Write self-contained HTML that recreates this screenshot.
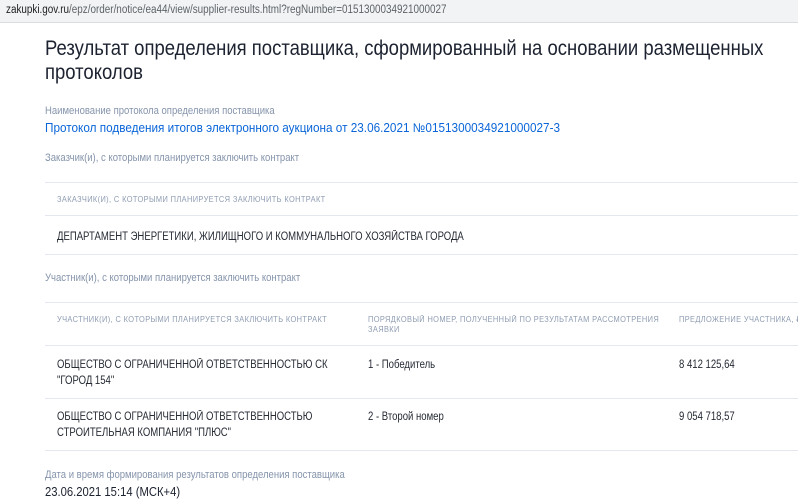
<!DOCTYPE html>
<html><head><meta charset="utf-8"><style>
body{margin:0;width:798px;height:500px;overflow:hidden;background:#fff;font-family:"Liberation Sans",Arial,sans-serif;position:relative}
.a{position:absolute;white-space:nowrap;transform-origin:0 0}
.bar{position:absolute;left:0;top:0;width:798px;height:22px;background:#f1f3f4;border-bottom:1px solid #dadce0}
.ln{position:absolute;left:45px;width:753px;height:1px;background:#e4e8ee}
.lab{color:#8594ab;font-size:11px;transform:scaleX(.865)}
.th{color:#8e9cb2;font-size:8px;letter-spacing:.4px;transform:scaleX(.93)}
.td{color:#252a33;font-size:11.5px;transform:scaleX(.83);line-height:16px}
</style></head><body>
<div class="bar"></div>
<div class="a" style="left:6px;top:4px;font-size:11.5px;color:#5f6368;transform:scaleX(.86)"><span style="color:#202124">zakupki.gov.ru</span>/epz/order/notice/ea44/view/supplier-results.html?regNumber=0151300034921000027</div>
<div class="a" style="left:45px;top:37px;font-size:21px;color:#1c2230;line-height:24px;transform:scaleX(.88)">Результат определения поставщика, сформированный на основании размещенных<br>протоколов</div>
<div class="a lab" style="left:45px;top:105px">Наименование протокола определения поставщика</div>
<div class="a" style="left:45px;top:121px;font-size:12.5px;color:#0a66d8;transform:scaleX(.94)">Протокол подведения итогов электронного аукциона от 23.06.2021 №0151300034921000027-3</div>
<div class="a lab" style="left:45px;top:152px">Заказчик(и), с которыми планируется заключить контракт</div>
<div class="ln" style="top:182px"></div>
<div class="a th" style="left:57px;top:195px">ЗАКАЗЧИК(И), С КОТОРЫМИ ПЛАНИРУЕТСЯ ЗАКЛЮЧИТЬ КОНТРАКТ</div>
<div class="ln" style="top:215px"></div>
<div class="a td" style="left:57px;top:229px">ДЕПАРТАМЕНТ ЭНЕРГЕТИКИ, ЖИЛИЩНОГО И КОММУНАЛЬНОГО ХОЗЯЙСТВА ГОРОДА</div>
<div class="ln" style="top:254px"></div>
<div class="a lab" style="left:45px;top:272px">Участник(и), с которыми планируется заключить контракт</div>
<div class="ln" style="top:302px"></div>
<div class="a th" style="left:57px;top:315px">УЧАСТНИК(И), С КОТОРЫМИ ПЛАНИРУЕТСЯ ЗАКЛЮЧИТЬ КОНТРАКТ</div>
<div class="a th" style="left:368px;top:315px;line-height:10px">ПОРЯДКОВЫЙ НОМЕР, ПОЛУЧЕННЫЙ ПО РЕЗУЛЬТАТАМ РАССМОТРЕНИЯ<br>ЗАЯВКИ</div>
<div class="a th" style="left:679px;top:315px">ПРЕДЛОЖЕНИЕ УЧАСТНИКА, ₽</div>
<div class="ln" style="top:345px"></div>
<div class="a td" style="left:57px;top:357px">ОБЩЕСТВО С ОГРАНИЧЕННОЙ ОТВЕТСТВЕННОСТЬЮ СК<br>"ГОРОД 154"</div>
<div class="a td" style="left:368px;top:357px">1 - Победитель</div>
<div class="a td" style="left:679px;top:357px">8 412 125,64</div>
<div class="ln" style="top:398px"></div>
<div class="a td" style="left:57px;top:409px">ОБЩЕСТВО С ОГРАНИЧЕННОЙ ОТВЕТСТВЕННОСТЬЮ<br>СТРОИТЕЛЬНАЯ КОМПАНИЯ "ПЛЮС"</div>
<div class="a td" style="left:368px;top:409px">2 - Второй номер</div>
<div class="a td" style="left:679px;top:409px">9 054 718,57</div>
<div class="ln" style="top:450px"></div>
<div class="a lab" style="left:45px;top:469px">Дата и время формирования результатов определения поставщика</div>
<div class="a" style="left:45px;top:485px;font-size:12.5px;color:#1c2230;transform:scaleX(.9)">23.06.2021 15:14 (МСК+4)</div>
</body></html>
